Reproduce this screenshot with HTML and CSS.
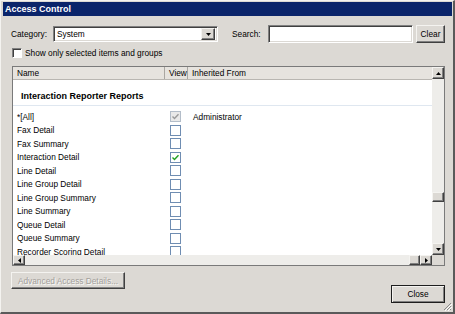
FILE: index.html
```html
<!DOCTYPE html>
<html>
<head>
<meta charset="utf-8">
<link rel="stylesheet" href="styles.css">
</head>
<body>
<div class="window">
  <div class="titlebar">Access Control</div>
  <div class="client">
    <div class="toolbar">
      <span class="lbl cat-lbl">Category:</span>
      <div class="combo">
        <span class="combo-text">System</span>
        <span class="arrow-btn combo-btn"><svg width="5" height="3" viewBox="0 0 5 3"><polygon points="0,0 5,0 2.5,3" fill="#000"/></svg></span>
      </div>
      <span class="lbl search-lbl">Search:</span>
      <div class="input"></div>
      <button class="btn clear">Clear</button>
    </div>
    <div class="checkrow">
      <span class="cb"></span>
      <span class="cb-label">Show only selected items and groups</span>
    </div>
    <div class="table">
      <div class="content">
        <div class="thead">
          <div class="th">Name</div>
          <div class="th">View</div>
          <div class="th last">Inherited From</div>
        </div>
        <div class="tbody">
          <div class="group">Interaction Reporter Reports</div>
          <div class="row"><span class="c-name">*[All]</span><span class="c-view"><span class="chk disabled"><svg width="9" height="9" viewBox="0 0 9 9"><path d="M1.5 4.5 L3.5 6.5 L7.5 2.2" fill="none" stroke="#9a9a9a" stroke-width="1.4"/></svg></span></span><span class="c-inh">Administrator</span></div>
          <div class="row"><span class="c-name">Fax Detail</span><span class="c-view"><span class="chk"></span></span><span class="c-inh"></span></div>
          <div class="row"><span class="c-name">Fax Summary</span><span class="c-view"><span class="chk"></span></span><span class="c-inh"></span></div>
          <div class="row"><span class="c-name">Interaction Detail</span><span class="c-view"><span class="chk"><svg width="9" height="9" viewBox="0 0 9 9"><path d="M1.5 4.5 L3.5 6.5 L7.5 2.2" fill="none" stroke="#21a121" stroke-width="1.4"/></svg></span></span><span class="c-inh"></span></div>
          <div class="row"><span class="c-name">Line Detail</span><span class="c-view"><span class="chk"></span></span><span class="c-inh"></span></div>
          <div class="row"><span class="c-name">Line Group Detail</span><span class="c-view"><span class="chk"></span></span><span class="c-inh"></span></div>
          <div class="row"><span class="c-name">Line Group Summary</span><span class="c-view"><span class="chk"></span></span><span class="c-inh"></span></div>
          <div class="row"><span class="c-name">Line Summary</span><span class="c-view"><span class="chk"></span></span><span class="c-inh"></span></div>
          <div class="row"><span class="c-name">Queue Detail</span><span class="c-view"><span class="chk"></span></span><span class="c-inh"></span></div>
          <div class="row"><span class="c-name">Queue Summary</span><span class="c-view"><span class="chk"></span></span><span class="c-inh"></span></div>
          <div class="row"><span class="c-name">Recorder Scoring Detail</span><span class="c-view"><span class="chk"></span></span><span class="c-inh"></span></div>
        </div>
      </div>
      <div class="vscroll">
        <span class="arrow-btn sb-btn"><svg width="5" height="3" viewBox="0 0 5 3"><polygon points="0,3 5,3 2.5,0" fill="#000"/></svg></span>
        <div class="vtrack"><span class="vthumb"></span></div>
        <span class="arrow-btn sb-btn"><svg width="5" height="3" viewBox="0 0 5 3"><polygon points="0,0 5,0 2.5,3" fill="#000"/></svg></span>
      </div>
      <div class="hscroll">
        <span class="arrow-btn hb-btn"><svg width="3" height="5" viewBox="0 0 3 5"><polygon points="3,0 3,5 0,2.5" fill="#000"/></svg></span>
        <div class="htrack"></div>
        <span class="hthumb"></span>
        <span class="arrow-btn hb-btn"><svg width="3" height="5" viewBox="0 0 3 5"><polygon points="0,0 0,5 3,2.5" fill="#000"/></svg></span>
      </div>
      <div class="corner"></div>
    </div>
    <div class="bottom">
      <button class="btn adv" disabled>Advanced Access Details...</button>
      <button class="btn close">Close</button>
    </div>
  </div>
  <svg class="grip" width="9" height="9" viewBox="0 0 9 9">
    <path d="M8 1 L1 8 M8 4 L4 8 M8 7 L7 8" stroke="#8a8a8a" stroke-width="1"/>
    <path d="M9 2 L2 9 M9 5 L5 9" stroke="#ffffff" stroke-width="1"/>
  </svg>
</div>
</body>
</html>
```
FILE: styles.css
```css
* { box-sizing: border-box; }
html, body { margin: 0; padding: 0; }
body {
  width: 455px;
  height: 314px;
  overflow: hidden;
  font-family: "Liberation Sans", Arial, sans-serif;
  font-size: 8.3px;
  color: #000;
  background: #dcd9d4;
}
.window {
  position: relative;
  width: 455px;
  height: 314px;
  background: #dcd9d4;
  border-style: solid;
  border-width: 1px 2px 2px 1px;
  border-color: #f4f3f0 #5a5a5a #5a5a5a #f4f3f0;
  padding: 1px 1px 0 2px;
  display: flex;
  flex-direction: column;
}
.titlebar {
  height: 14px;
  background: #0a246a;
  color: #fff;
  font-weight: bold;
  font-size: 9px;
  line-height: 14px;
  padding-left: 2px;
}
.client {
  padding: 9px 7px 0 8px;
  display: flex;
  flex-direction: column;
}
.toolbar {
  display: flex;
  align-items: center;
  height: 18px;
}
.lbl { line-height: 12px; }
.cat-lbl { width: 42px; }
.search-lbl { width: 36px; margin-left: 14px; }
.combo {
  width: 165px;
  height: 16px;
  background: #fff;
  border: 1px solid;
  border-color: #808080 #fff #fff #808080;
  box-shadow: inset 1px 1px #404040, inset -1px -1px #dcd9d4;
  display: flex;
  align-items: center;
  padding: 0 2px 0 3px;
}
.combo-text { flex: 1; line-height: 12px; }
.arrow-btn {
  display: flex;
  align-items: center;
  justify-content: center;
  background: #dcd9d4;
  border: 1px solid;
  border-color: #f4f3f0 #404040 #404040 #f4f3f0;
  box-shadow: inset -1px -1px #808080;
}
.combo-btn { width: 14px; height: 12px; }
.input {
  width: 145px;
  height: 18px;
  background: #fff;
  border: 1px solid;
  border-color: #808080 #fff #fff #808080;
  box-shadow: inset 1px 1px #404040, inset -1px -1px #dcd9d4;
}
.btn {
  font-family: "Liberation Sans", Arial, sans-serif;
  font-size: 8.3px;
  color: #000;
  background: #dcd9d4;
  border: 1px solid;
  border-color: #f4f3f0 #404040 #404040 #f4f3f0;
  box-shadow: inset -1px -1px #808080;
  padding: 0;
  margin: 0;
}
.clear { width: 29px; height: 18px; margin-left: 3px; }
.checkrow {
  display: flex;
  align-items: center;
  height: 12px;
  margin-top: 4px;
}
.cb {
  width: 10px;
  height: 10px;
  margin-left: 1px;
  background: #fff;
  border: 1px solid;
  border-color: #808080 #fff #fff #808080;
  box-shadow: inset 1px 1px #404040;
}
.cb-label { margin-left: 3px; line-height: 12px; }
.table {
  margin-top: 7px;
  margin-left: 1px;
  height: 200px;
  background: #fff;
  border: 1px solid #7a7a7a;
  display: grid;
  grid-template-columns: 1fr 12px;
  grid-template-rows: 1fr 10px;
}
.content { overflow: hidden; }
.thead {
  display: grid;
  grid-template-columns: 152px 23px 1fr;
  height: 13px;
  background: #e6e3de;
  border-bottom: 1px solid #b9b6b1;
}
.th {
  padding-left: 4px;
  line-height: 12px;
  border-right: 1px solid #a9a6a1;
}
.th.last { border-right: none; padding-left: 4px; }
.tbody { overflow: hidden; }
.group {
  font-weight: bold;
  font-size: 9px;
  line-height: 13px;
  padding: 10px 0 2px 8px;
  border-bottom: 1px solid #dfe7f0;
  margin-bottom: 4px;
}
.row {
  display: grid;
  grid-template-columns: 152px 23px 1fr;
  height: 13.5px;
  align-items: center;
  line-height: 12px;
}
.c-name { padding-left: 4px; white-space: nowrap; }
.c-view { display: flex; align-items: center; padding-left: 5px; }
.c-inh { padding-left: 5px; }
.chk {
  width: 11px;
  height: 11px;
  background: #fff;
  border: 1px solid #6f8db2;
  display: flex;
  align-items: center;
  justify-content: center;
}
.chk.disabled { background: #e9e9e9; border-color: #b3bdc9; }
.vscroll {
  display: flex;
  flex-direction: column;
  background: #eeedea;
}
.sb-btn { height: 12px; width: 12px; }
.vtrack { flex: 1; }
.vthumb {
  display: block;
  height: 10px;
  margin-top: 113px;
  background: #dcd9d4;
  border: 1px solid;
  border-color: #f4f3f0 #404040 #404040 #f4f3f0;
  box-shadow: inset -1px -1px #808080;
}
.hscroll {
  display: flex;
  background: #eeedea;
}
.hb-btn { width: 12px; height: 10px; }
.htrack { flex: 1; }
.hthumb {
  width: 11px;
  height: 10px;
  background: #dcd9d4;
  border: 1px solid;
  border-color: #f4f3f0 #404040 #404040 #f4f3f0;
  box-shadow: inset -1px -1px #808080;
}
.corner { background: #dcd9d4; }
.bottom {
  margin-top: 6px;
  height: 31px;
  display: flex;
  justify-content: space-between;
}
.adv {
  width: 114px;
  height: 17px;
  margin-left: 0;
  align-self: flex-start;
  color: #a3a09b;
  text-shadow: 1px 1px #fafaf8;
}
.close {
  width: 54px;
  height: 18px;
  align-self: flex-end;
  border: 1px solid #1e1e1e;
  box-shadow: inset 1px 1px #f4f3f0, inset -1px -1px #808080;
}
.grip {
  position: absolute;
  right: 1px;
  bottom: 1px;
}
```
